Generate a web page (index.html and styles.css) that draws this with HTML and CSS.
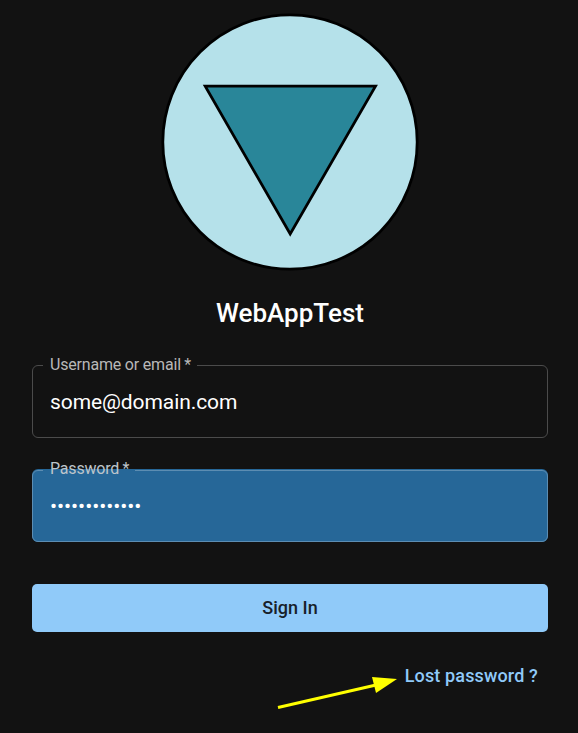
FILE: index.html
```html
<!DOCTYPE html>
<html lang="en">
<head>
<meta charset="utf-8">
<title>WebAppTest</title>
<link rel="stylesheet" href="styles.css">
</head>
<body>
<main class="login">
  <svg class="logo" viewBox="0 0 260 260" aria-hidden="true">
    <circle cx="130" cy="130" r="127.2"/>
    <path d="M45.2 74.2H215.5L130.2 222Z"/>
  </svg>
  <h1 class="title">WebAppTest</h1>
  <form class="form">
    <div class="field">
      <span class="label">Username or email<span class="star">*</span></span>
      <span class="value">some@domain.com</span>
    </div>
    <div class="field filled">
      <span class="label">Password<span class="star">*</span></span>
      <span class="value dots">•••••••••••••</span>
    </div>
    <button class="submit" type="button">Sign In</button>
  </form>
  <div class="footer">
    <svg class="arrow" viewBox="0 0 122 36" aria-hidden="true">
      <path class="shaft" d="M2 31.5L100 9"/>
      <path class="head" d="M121 3L96 1L100 17Z"/>
    </svg>
    <a class="lost">Lost password ?</a>
  </div>
</main>
</body>
</html>
```
FILE: styles.css
```css
* { box-sizing: border-box; }
body { margin: 0; background: #121212; color: #fff; font-family: Roboto, sans-serif; }
.login { height: 733px; padding: 12px 30px 0 32px; display: flex; flex-direction: column; }
.logo { width: 260px; height: 260px; align-self: center; flex: none; stroke: #000; stroke-width: 2.8; }
.logo circle { fill: #b5e1ea; }
.logo path { fill: #298699; }
.title { margin: 25px 0 0; height: 32px; line-height: 32px; font-size: 26px; font-weight: 500; text-align: center; }
.form { margin-top: 36px; display: flex; flex-direction: column; }
.field { position: relative; height: 73px; border-radius: 6px; padding: 0 18px; display: flex; align-items: center; margin-bottom: 31px; }
.field::before { content: ""; position: absolute; inset: 0; border: 1px solid #4b4b4b; border-radius: inherit; }
.filled { background: #266798; margin-bottom: 42px; }
.filled::before { top: 1px; border-color: #5c8db2; }
.label { position: absolute; left: 11px; top: -10px; height: 20px; padding: 0 6px 0 7px; line-height: 20px; font-size: 16px; letter-spacing: -.19px; color: #b8b8b8; background: linear-gradient(#121212, #121212) 0 10px / 100% 2px no-repeat; }
.filled .label { background-image: linear-gradient(#266798, #266798); color: #bec5ca; }
.star { margin-left: 3.3px; }
.value { font-size: 21px; letter-spacing: -.08px; }
.dots { letter-spacing: -.06px; }
.submit { height: 48px; border: 0; border-radius: 5px; padding: 0 0 2px; background: #90caf9; color: #17202a; font: 500 18px Roboto, sans-serif; }
.footer { margin-top: 32px; display: flex; justify-content: flex-end; padding-right: 10px; gap: 7px; }
.arrow { width: 122px; height: 36px; margin-top: 12px; }
.shaft { stroke: #ff0; stroke-width: 3; }
.head { fill: #ff0; }
.lost { color: #90caf9; font-size: 18px; font-weight: 500; line-height: 24px; letter-spacing: .14px; }
```
